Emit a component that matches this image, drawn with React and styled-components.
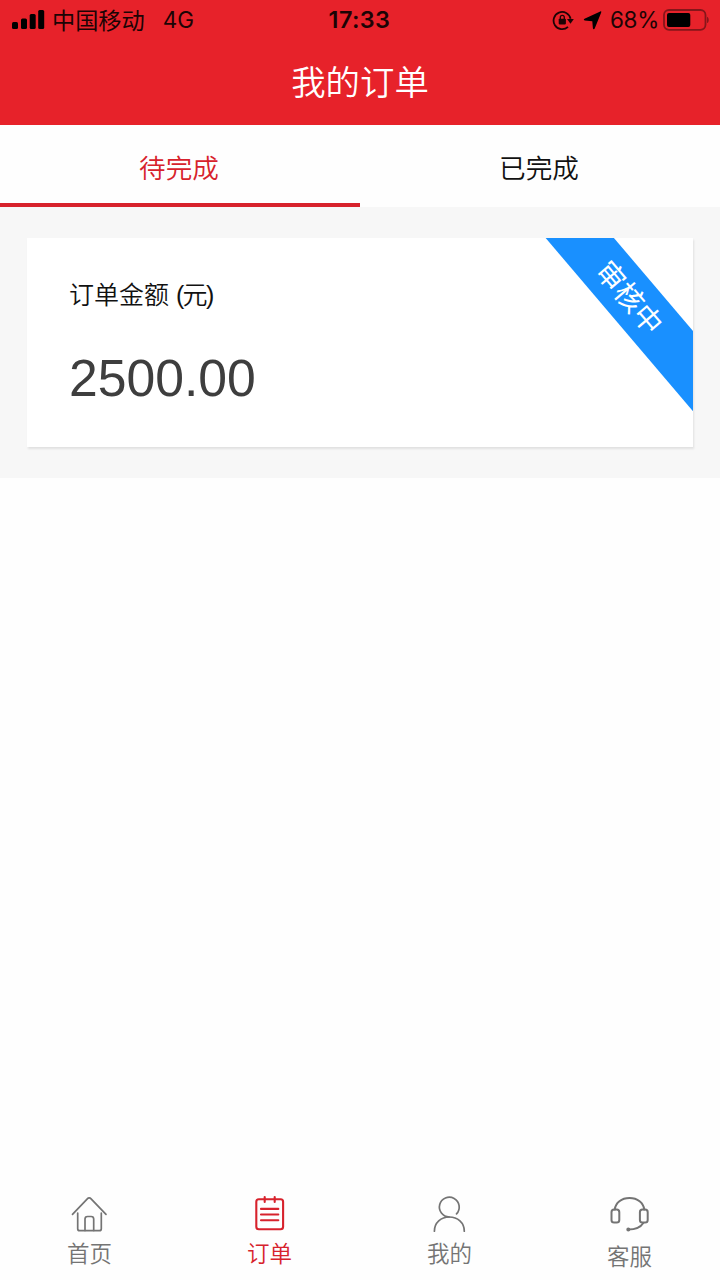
import React from 'react';
import styled, { createGlobalStyle } from 'styled-components';

const RED = '#e7222a';
const GREY = '#747474';

const GlobalStyle = createGlobalStyle`
  * { box-sizing: border-box; }
  body {
    margin: 0;
    background: #fff;
    font-family: "Liberation Sans", "Noto Sans CJK SC", sans-serif;
  }
`;

const Screen = styled.div`
  width: 720px;
  height: 1280px;
  display: flex;
  flex-direction: column;
  background: #fefefe;
  overflow: hidden;
`;

const Header = styled.header`
  height: 125px;
  background: ${RED};
`;

const StatusBar = styled.div`
  height: 39px;
  display: grid;
  grid-template-columns: 1fr auto 1fr;
  align-items: center;
  padding: 0 12px;
  color: #1c0405;
  font-family: Inter, "Noto Sans CJK SC", sans-serif;
  font-size: 23px;
  line-height: 39px;
`;

const StatusGroup = styled.div`
  display: flex;
  align-items: center;
  justify-content: ${(p) => (p.$end ? 'flex-end' : 'flex-start')};
  margin-right: ${(p) => (p.$end ? '-1px' : '0')};
`;

const Carrier = styled.span`
  margin-left: 6px;
  font-family: "Noto Sans CJK SC", sans-serif;
  font-size: 23.2px;
  line-height: 36px;
  padding-bottom: 2px;
`;

const Network = styled.span`
  margin-left: 18px;
  font-size: 22.5px;
`;

const Clock = styled.span`
  padding-right: 1px;
  font-weight: 600;
  font-size: 23.4px;
  letter-spacing: 0.4px;
`;

const Percent = styled.span`
  margin: 0 4px 0 8px;
  font-size: 22.5px;
  letter-spacing: -0.3px;
`;

const Title = styled.h1`
  margin: 0;
  color: #fff;
  font: 350 34.4px/83px "Noto Sans CJK SC", sans-serif;
  text-align: center;
`;

const Tabs = styled.nav`
  display: flex;
  height: 82px;
`;

const Tab = styled.div`
  flex: 1;
  height: 82px;
  padding-right: 2px;
  border-bottom: 4px solid ${(p) => (p.$active ? '#d7222c' : 'transparent')};
  color: ${(p) => (p.$active ? '#d7222c' : '#111')};
  font: 350 26.6px/84px "Noto Sans CJK SC", sans-serif;
  text-align: center;
`;

const OrderList = styled.main`
  height: 271px;
  padding: 31px 27px 30px;
  background: #f7f7f7;
`;

const CardShadow = styled.div`
  box-shadow: 1px 2px 2px rgba(0, 0, 0, 0.09);
`;

const Card = styled.article`
  position: relative;
  height: 209px;
  padding: 38px 42px;
  overflow: hidden;
  background: #fff;
`;

const Label = styled.div`
  color: #111;
  font-size: 25px;
  font-weight: 350;
  line-height: 38px;
`;

const Unit = styled.span`
  letter-spacing: -1.7px;
`;

const Amount = styled.div`
  margin-top: 34px;
  color: #3e3e3e;
  font-size: 51.7px;
  line-height: 60px;
`;

const Ribbon = styled.div`
  position: absolute;
  top: 33px;
  right: -87px;
  width: 300px;
  height: 52px;
  background: #1990ff;
  color: #fff;
  font-size: 28.4px;
  line-height: 54px;
  text-align: center;
  transform: rotate(49.6deg);
`;

const BottomNav = styled.nav`
  display: flex;
  height: 96px;
  margin-top: auto;
`;

const NavItem = styled.div`
  flex: 1;
  display: flex;
  flex-direction: column;
  align-items: center;
  padding: 5px 2px 0 0;
  color: ${(p) => (p.$active ? '#d7222c' : GREY)};
`;

const NavLabel = styled.span`
  margin: ${(p) => p.$gap}px 0 0 1px;
  font: 350 22.5px/32px "Noto Sans CJK SC", sans-serif;
`;

const NavIcon = ({ children, weight = 1.7 }) => (
  <svg width="44" height="44" viewBox="0 0 44 44" fill="none" stroke="currentColor" strokeWidth={weight} strokeLinecap="round" strokeLinejoin="round">
    {children}
  </svg>
);

const HomeIcon = () => (
  <NavIcon>
    <path d="M5.5 25.3 20.3 9.800a2.600 2.600 0 0 1 3.800 0L39 25.300" />
    <path d="M10.700 24v15.700a2 2 0 0 0 2 2h19.600a2 2 0 0 0 2-2V24" />
    <path d="M18 41.500V30a2.500 2.500 0 0 1 2.500-2.500h3.700a2.500 2.500 0 0 1 2.500 2.500V41.500" />
  </NavIcon>
);

const OrderIcon = () => (
  <NavIcon weight={2.1}>
    <rect x="9.3" y="10.3" width="26.8" height="30" rx="2.5" />
    <path d="M17.700 8v5M27.700 8v5M14 19.900h17.300M14 25.500h17.300M14 31.200h17.300" />
  </NavIcon>
);

const ProfileIcon = () => (
  <NavIcon>
    <path d="M29.500 24.900A9.900 9.900 0 1 0 22.200 28" />
    <path d="M7.400 42.200C7.400 33.800 14 28 22.300 28S37.300 33.800 37.300 42.200" />
  </NavIcon>
);

const ServiceIcon = () => (
  <NavIcon weight={2}>
    <rect x="4.5" y="20.6" width="7.8" height="13" rx="2.6" />
    <rect x="32.9" y="20.6" width="7.8" height="13" rx="2.6" />
    <path d="M7.700 20.600C8.500 13.800 14.500 9 22.500 9S36.500 13.800 37.300 20.600M36.300 34c-2.800 4.500-7.300 6.500-15 6.600" />
    <circle cx="21.3" cy="40.6" r="1" fill="currentColor" />
  </NavIcon>
);

const SignalIcon = () => (
  <svg width="34" height="22" viewBox="0 0 34 22" fill="#000">
    <rect x="0" y="13" width="6" height="7" rx="1.5" />
    <rect x="9" y="9.500" width="6" height="10.500" rx="1.5" />
    <rect x="17.7" y="5" width="6" height="15" rx="1.5" />
    <rect x="26.2" y="1" width="6" height="19" rx="1.5" />
  </svg>
);

const RotationLockIcon = () => (
  <svg width="22" height="22" viewBox="0 0 22 22" fill="none" stroke="#1c0405" strokeWidth="1.8">
    <path d="M16 17.900A8.600 8.600 0 1 1 18.600 9.800" />
    <path d="M15 10h6.800l-3.300 4.700z" fill="#1c0405" stroke="none" />
    <rect x="6.7" y="9.8" width="7.2" height="5.6" rx=".8" fill="#1c0405" stroke="none" />
    <path d="M8.300 10V8.400a2 2 0 0 1 4 0V10" strokeWidth="1.3" />
  </svg>
);

const LocationIcon = () => (
  <svg width="20" height="20" viewBox="0 0 20 20" fill="#000">
    <path d="M18.300 1.500c.7-.4 1.200.1.900.9l-6.500 16.100c-.4 1-1.700.9-1.800-.2l-.6-7-7.600-.9c-1.100-.1-1.200-1.200-.2-1.600z" />
  </svg>
);

const BatteryIcon = () => (
  <svg width="46" height="22" viewBox="0 0 46 22">
    <rect x="1" y="1" width="41.5" height="19.8" rx="5" fill="none" stroke="#85161a" strokeWidth="1.8" />
    <rect x="4" y="4" width="23.3" height="14" rx="2" fill="#000" />
    <path d="M44 7.800c2.300.8 2.300 5.500 0 6.300z" fill="#85161a" />
  </svg>
);

const Spacer = styled.span`
  width: 8px;
`;

export default function App() {
  return (
    <>
      <GlobalStyle />
      <Screen>
        <Header>
          <StatusBar>
            <StatusGroup>
              <SignalIcon />
              <Carrier>中国移动</Carrier>
              <Network>4G</Network>
            </StatusGroup>
            <Clock>17:33</Clock>
            <StatusGroup $end>
              <RotationLockIcon />
              <Spacer />
              <LocationIcon />
              <Percent>68%</Percent>
              <BatteryIcon />
            </StatusGroup>
          </StatusBar>
          <Title>我的订单</Title>
        </Header>
        <Tabs>
          <Tab $active>待完成</Tab>
          <Tab>已完成</Tab>
        </Tabs>
        <OrderList>
          <CardShadow>
            <Card>
              <Label>订单金额 <Unit>(元)</Unit></Label>
              <Amount>2500.00</Amount>
              <Ribbon>审核中</Ribbon>
            </Card>
          </CardShadow>
        </OrderList>
        <BottomNav>
          <NavItem><HomeIcon /><NavLabel $gap={3}>首页</NavLabel></NavItem>
          <NavItem $active><OrderIcon /><NavLabel $gap={3}>订单</NavLabel></NavItem>
          <NavItem><ProfileIcon /><NavLabel $gap={3}>我的</NavLabel></NavItem>
          <NavItem><ServiceIcon /><NavLabel $gap={6}>客服</NavLabel></NavItem>
        </BottomNav>
      </Screen>
    </>
  );
}
